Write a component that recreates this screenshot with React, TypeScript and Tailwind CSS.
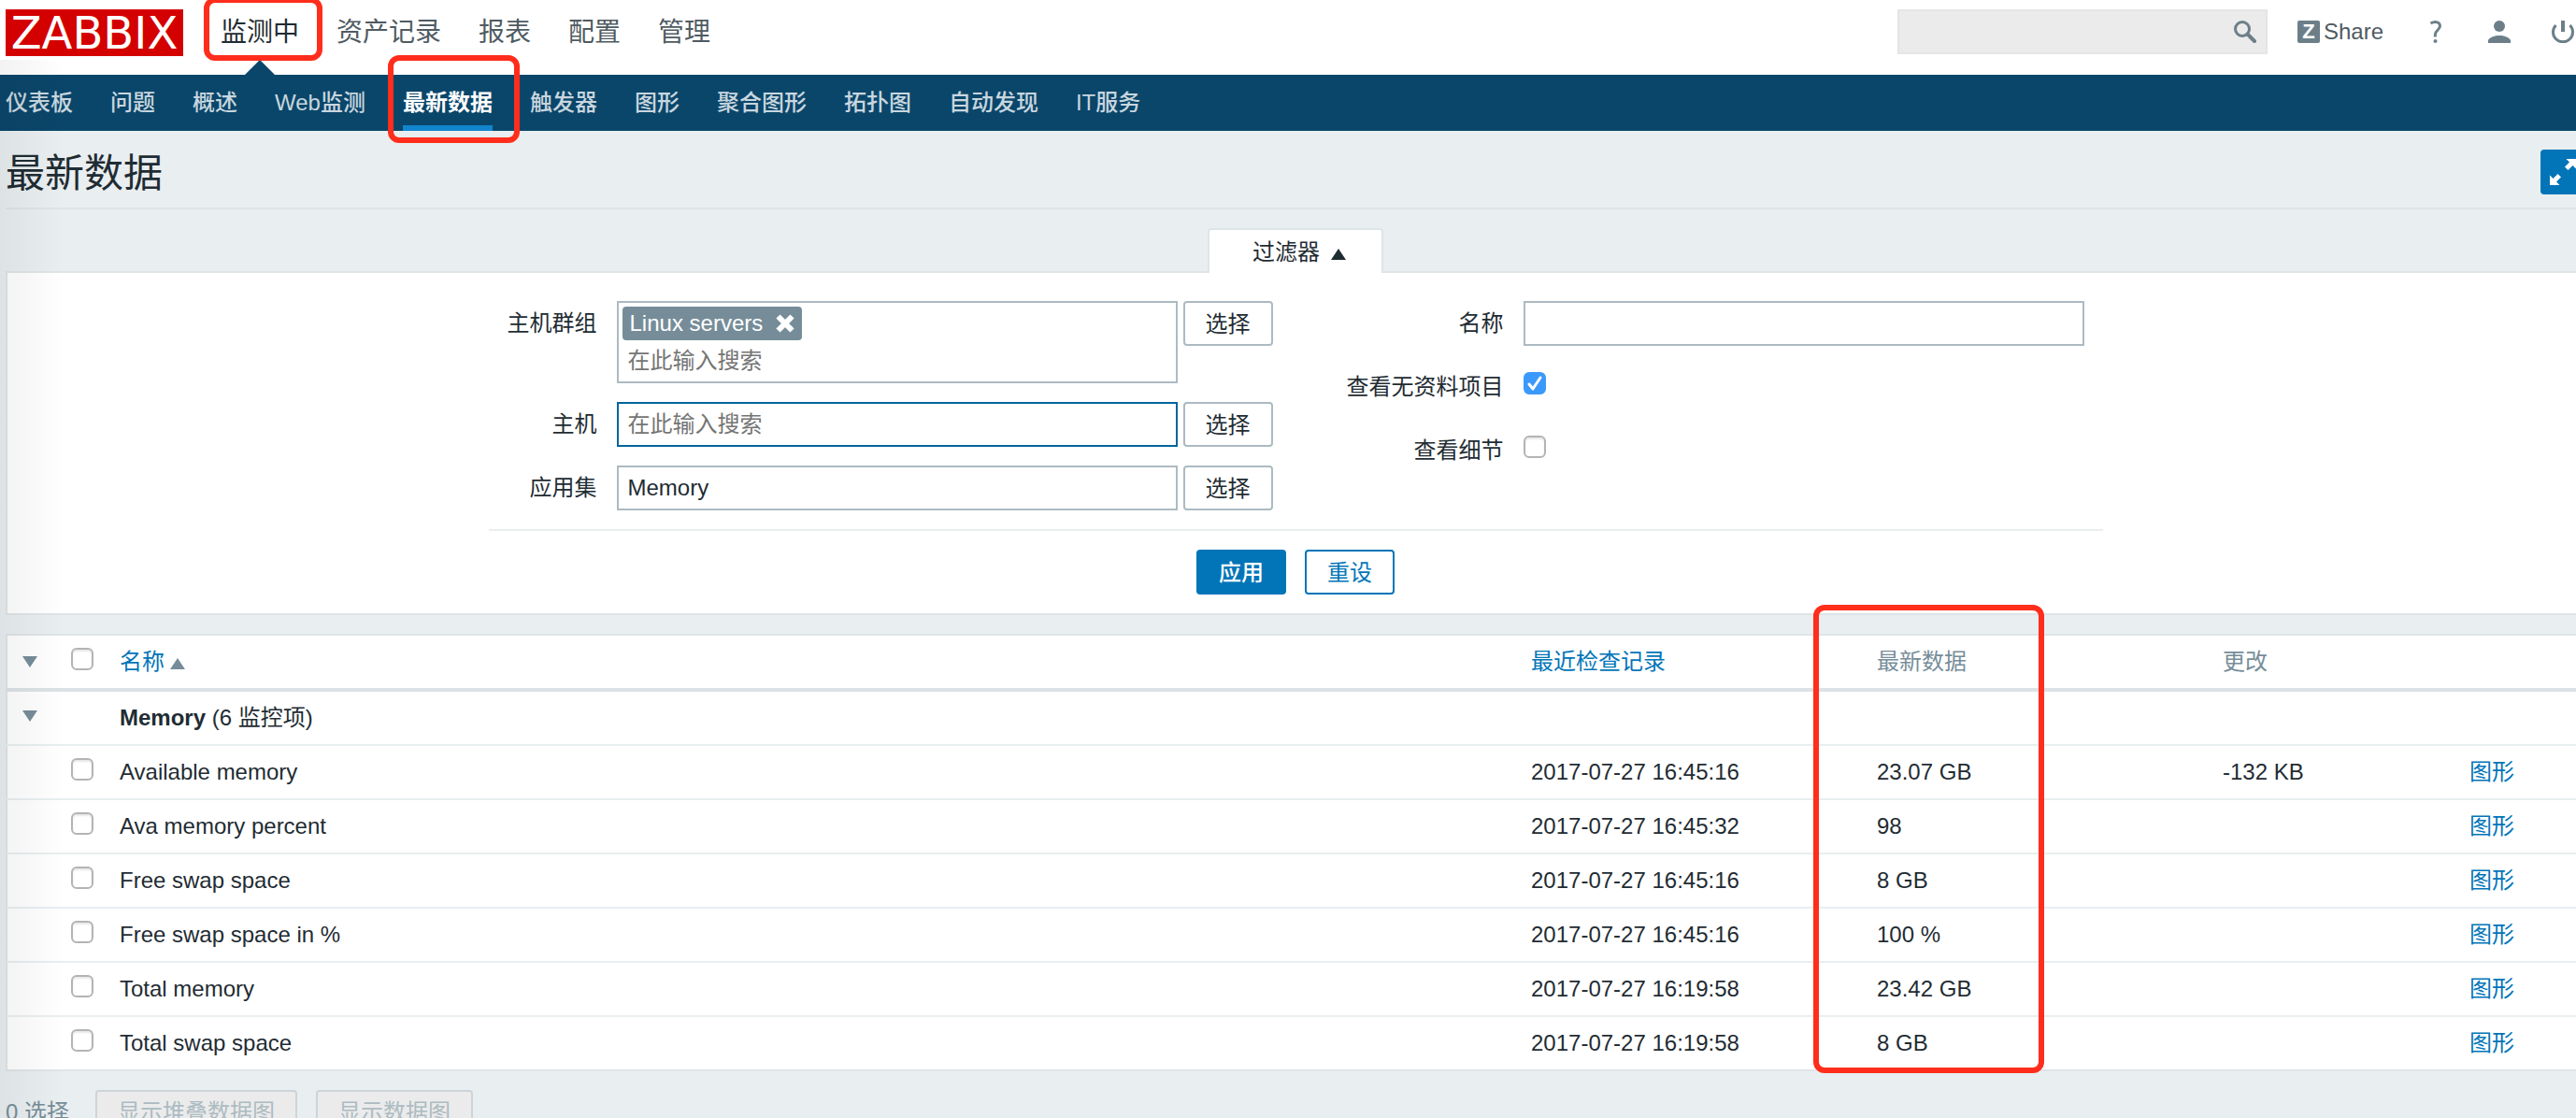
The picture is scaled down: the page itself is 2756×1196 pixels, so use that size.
import React, { useState } from 'react';

interface Item {
  name: string;
  lastCheck: string;
  lastValue: string;
  change?: string;
}

const mainMenu = ['监测中', '资产记录', '报表', '配置', '管理'];

const subMenu = [
  '仪表板', '问题', '概述', 'Web监测', '最新数据', '触发器',
  '图形', '聚合图形', '拓扑图', '自动发现', 'IT服务',
];

const items: Item[] = [
  { name: 'Available memory', lastCheck: '2017-07-27 16:45:16', lastValue: '23.07 GB', change: '-132 KB' },
  { name: 'Ava memory percent', lastCheck: '2017-07-27 16:45:32', lastValue: '98' },
  { name: 'Free swap space', lastCheck: '2017-07-27 16:45:16', lastValue: '8 GB' },
  { name: 'Free swap space in %', lastCheck: '2017-07-27 16:45:16', lastValue: '100 %' },
  { name: 'Total memory', lastCheck: '2017-07-27 16:19:58', lastValue: '23.42 GB' },
  { name: 'Total swap space', lastCheck: '2017-07-27 16:19:58', lastValue: '8 GB' },
];

const Triangle: React.FC<{ up?: boolean; className?: string }> = ({ up, className }) => (
  <svg viewBox="0 0 16 12" className={`w-4 h-3 ${className ?? ''}`} fill="currentColor" aria-hidden="true">
    <path d={up ? 'M8 0L16 12H0z' : 'M0 0H16L8 12z'} />
  </svg>
);

// 红色标注框
const Mark: React.FC<{ className: string }> = ({ className }) => (
  <span className={`absolute border-6 border-[#ff2d1c] rounded-xl pointer-events-none z-10 ${className}`} />
);

interface CheckboxProps {
  id?: string;
  label?: string;
  defaultChecked?: boolean;
}

const Checkbox: React.FC<CheckboxProps> = ({ id, label, defaultChecked }) => (
  <span className="relative block w-6 h-6">
    <input
      id={id}
      type="checkbox"
      aria-label={label}
      defaultChecked={defaultChecked}
      className="peer block appearance-none w-6 h-6 rounded-md border-2 border-[#b4b4b4] bg-white shadow-[inset_0_2px_2px_#e8e8e8] checked:bg-[#3b99fc] checked:border-[#3b99fc] checked:shadow-none"
    />
    <svg viewBox="0 0 24 24" className="absolute inset-0 hidden peer-checked:block pointer-events-none" fill="none" stroke="#fff" strokeWidth="3" strokeLinecap="round" strokeLinejoin="round">
      <path d="M6 13l4 5 8-12" />
    </svg>
  </span>
);

const SelectButton: React.FC = () => (
  <button type="button" className="block w-24 h-12 pt-0.5 border-2 border-[#acbbc2] rounded bg-white leading-[42px]">
    选择
  </button>
);

const Header: React.FC = () => (
  <header className="flex items-start justify-between h-20 bg-white">
    <div className="flex items-start pt-2.5 pl-1.5">
      <a href="#" className="flex items-center justify-center w-[190px] h-[50px] bg-[#d40000] text-white text-[48px] leading-[50px] font-['DejaVu_Sans',sans-serif]">
        ZABBIX
      </a>
      <nav className="flex gap-10 ml-10 text-[28px] leading-[50px] text-[#4f5b62]">
        {mainMenu.map((label, i) => (
          <div key={label} className="relative">
            <a href="#" className={i === 0 ? 'text-[#1f2c33]' : ''}>{label}</a>
            {i === 0 && (
              <>
                <Mark className="-left-[18px] -right-[25px] -top-[13px] h-[68px]" />
                <svg viewBox="0 0 32 16" className="absolute left-[26px] top-[54px] w-8 h-4" fill="#0a466a">
                  <path d="M16 0L32 16H0z" />
                </svg>
              </>
            )}
          </div>
        ))}
      </nav>
    </div>
    <div className="flex items-center h-12 mt-2.5 text-[#6c7f89]">
      <form className="relative w-[396px] mr-8">
        <input type="text" aria-label="搜索" className="block w-full h-12 px-3 pr-12 bg-[#ebebeb] border-2 border-[#e5e5e5]" />
        <button type="button" aria-label="搜索" className="absolute right-3 top-3">
          <svg viewBox="0 0 24 24" className="w-6 h-6" fill="none" stroke="currentColor" strokeWidth="3">
            <circle cx="9" cy="9" r="7.5" />
            <path d="M14.5 14.5L22 22" strokeWidth="4" strokeLinecap="round" />
          </svg>
        </button>
      </form>
      <a href="#" className="flex items-center gap-1 mr-[50px] text-[#4f5b62]">
        <span className="flex items-center justify-center w-6 h-6 rounded-xs bg-[#6c7f89] text-white text-[22px] leading-6 font-bold">Z</span>
        Share
      </a>
      <a href="#" aria-label="帮助" className="mr-[50px]">
        <svg viewBox="0 0 12 24" className="w-3 h-6" fill="none" stroke="currentColor" strokeWidth="3">
          <path d="M0.500 3C2.500 1.800 4 1.500 5.500 1.500c3 0 5 1.700 5 4.300 0 4.200-5.200 4.700-5.200 9.200v2.500" />
          <circle cx="5.500" cy="22" r="2" fill="currentColor" stroke="none" />
        </svg>
      </a>
      <a href="#" aria-label="用户" className="mr-11">
        <svg viewBox="0 0 24 24" className="w-6 h-6" fill="currentColor">
          <circle cx="12" cy="6" r="6" />
          <path d="M0 24v-3c2-3.500 7-5 12-5s10 1.500 12 5v3z" />
        </svg>
      </a>
      <a href="#" aria-label="退出" className="mr-0.5">
        <svg viewBox="0 0 24 24" className="w-6 h-6" fill="none" stroke="currentColor" strokeWidth="3">
          <path d="M4.500 5a10.500 10.500 0 1 0 15 0" />
          <path d="M12 0v12" strokeWidth="4" />
        </svg>
      </a>
    </div>
  </header>
);

const SubNav: React.FC = () => (
  <nav className="flex gap-10 h-[60px] pl-1.5 bg-[#0a466a] text-[#c8d6df] font-medium leading-[60px]">
    {subMenu.map((label) => {
      const active = label === '最新数据';
      return (
        <div key={label} className="relative">
          <a href="#" className={active ? 'block h-[60px] border-b-6 border-[#1285cd] text-white font-bold' : 'block'}>
            {label}
          </a>
          {active && <Mark className="-left-4 -right-[29px] -top-[21px] h-[94px]" />}
        </div>
      );
    })}
  </nav>
);

const Filter: React.FC = () => {
  const [groups, setGroups] = useState<string[]>(['Linux servers']);
  const inputClass = 'block w-full h-12 px-2.5 bg-white border-2 placeholder:text-[#757575] outline-none';

  return (
    <section className="pt-5">
      <div className="flex justify-center">
        <button type="button" className="relative flex items-center gap-3 h-12 -mb-0.5 pt-0.5 pr-[38px] pl-[46px] bg-white border-2 border-b-0 border-[#dfe4e7] rounded-t">
          过滤器
          <Triangle up className="mt-1" />
        </button>
      </div>
      <form className="pt-[30px] pb-5 bg-white border-2 border-[#dfe4e7]">
        <div className="w-fit mx-auto">
          <div className="flex gap-20 px-5 pb-5 border-b-2 border-[#e9eef0]">
            <div className="grid grid-cols-[96px_600px_96px] gap-y-5 leading-[48px]">
              <label htmlFor="groups" className="text-right">主机群组</label>
              <div className="h-[88px] ml-[21px] -mr-[21px] p-1 border-2 border-[#acbbc2]">
                {groups.map((group) => (
                  <span key={group} className="flex items-center justify-between w-48 h-9 px-2 rounded bg-[#768d99] text-white">
                    {group}
                    <button type="button" aria-label="移除" onClick={() => setGroups([])}>
                      <svg viewBox="0 0 20 20" className="w-5 h-5" stroke="currentColor" strokeWidth="6">
                        <path d="M2.500 2.500l15 15M17.500 2.500l-15 15" />
                      </svg>
                    </button>
                  </span>
                ))}
                <input id="groups" type="text" placeholder="在此输入搜索" className="block w-full h-11 px-1.5 placeholder:text-[#757575] outline-none" />
              </div>
              <div className="ml-[27px]"><SelectButton /></div>

              <label htmlFor="hosts" className="text-right">主机</label>
              <div className="ml-[21px] -mr-[21px]">
                <input id="hosts" type="text" placeholder="在此输入搜索" className={`${inputClass} border-[#00659c]`} />
              </div>
              <div className="ml-[27px]"><SelectButton /></div>

              <label htmlFor="application" className="text-right">应用集</label>
              <div className="ml-[21px] -mr-[21px]">
                <input id="application" type="text" defaultValue="Memory" className={`${inputClass} border-[#acbbc2]`} />
              </div>
              <div className="ml-[27px]"><SelectButton /></div>
            </div>
            <div className="grid grid-cols-[168px_600px] content-start gap-x-[21px] gap-y-5 ml-[26px] leading-[48px]">
              <label htmlFor="name" className="text-right">名称</label>
              <input id="name" type="text" className={`${inputClass} border-[#acbbc2]`} />
              <label htmlFor="no-data" className="h-12 text-right">查看无资料项目</label>
              <div className="pt-2"><Checkbox id="no-data" defaultChecked /></div>
              <label htmlFor="details" className="h-12 text-right">查看细节</label>
              <div className="pt-2"><Checkbox id="details" /></div>
            </div>
          </div>
          <div className="flex justify-center gap-5 pt-5">
            <button type="submit" className="w-24 h-12 pt-0.5 rounded bg-[#0275b8] text-white font-medium">应用</button>
            <button type="reset" className="w-24 h-12 pt-0.5 rounded border-2 border-[#0275b8] bg-white text-[#0275b8]">重设</button>
          </div>
        </div>
      </form>
    </section>
  );
};

const DataTable: React.FC = () => (
  <table className="w-full mt-5 table-fixed border-collapse bg-white border-2 border-[#dfe4e7] text-left">
    <colgroup>
      <col className="w-[59px]" />
      <col className="w-[52px]" />
      <col />
      <col className="w-[370px]" />
      <col className="w-[370px]" />
      <col className="w-[264px]" />
      <col className="w-[133px]" />
    </colgroup>
    <thead>
      <tr className="h-[59px] border-b-4 border-[#dce2e5] text-[#768d99]">
        <th className="pl-4">
          <button type="button" aria-label="展开全部" className="block"><Triangle /></button>
        </th>
        <th className="px-2.5 pb-1.5"><Checkbox label="全选" /></th>
        <th className="px-2.5 font-normal">
          <a href="#" className="inline-flex items-center gap-1.5 text-[#0275b8]">
            名称
            <Triangle up className="mt-1 text-[#768d99]" />
          </a>
        </th>
        <th className="px-2.5 font-normal"><a href="#" className="text-[#0275b8]">最近检查记录</a></th>
        <th className="relative px-2.5 font-normal">
          最新数据
          <Mark className="-left-[58px] -top-[33px] w-[247px] h-[501px]" />
        </th>
        <th className="px-2.5 font-normal">更改</th>
        <th />
      </tr>
    </thead>
    <tbody>
      <tr className="h-[59px] border-b-2 border-[#e9eef0]">
        <td className="pl-4 pb-1 text-[#768d99]">
          <button type="button" aria-label="收起" className="block"><Triangle /></button>
        </td>
        <td />
        <td className="px-2.5" colSpan={5}><b>Memory</b> (6 监控项)</td>
      </tr>
      {items.map((item) => (
        <tr key={item.name} className="h-[58px] border-b-2 border-[#e9eef0] last:border-[#dfe4e7]">
          <td />
          <td className="px-2.5 pb-1.5"><Checkbox label={item.name} /></td>
          <td className="px-2.5">{item.name}</td>
          <td className="px-2.5">{item.lastCheck}</td>
          <td className="px-2.5">{item.lastValue}</td>
          <td className="px-2.5">{item.change}</td>
          <td className="px-2.5"><a href="#" className="text-[#0275b8]">图形</a></td>
        </tr>
      ))}
    </tbody>
  </table>
);

export default function App() {
  return (
    <div
      lang="zh-CN"
      className="relative h-screen overflow-hidden bg-[#e9eef0] text-2xl leading-8 text-[#1f2c33] font-['Liberation_Sans','Noto_Sans_CJK_SC',sans-serif]"
    >
      <Header />
      <SubNav />
      <main className="ml-1.5 -mr-2.5">
        <div className="flex items-start justify-between h-[84px] pt-5 border-b-2 border-[#dfe4e7]">
          <h1 className="text-[42px] leading-[52px]">最新数据</h1>
          <button type="button" aria-label="全屏" className="flex items-center justify-center w-12 h-12 rounded bg-[#0275b8] text-white">
            <svg viewBox="0 0 28 28" className="w-7 h-7" fill="currentColor">
              <path d="M17.500 0H28v10.500l-3.500-3.500-5 5-3.500-3.500 5-5z" />
              <path d="M10.500 28H0V17.500l3.500 3.500 5-5 3.500 3.500-5 5z" />
            </svg>
          </button>
        </div>
        <Filter />
        <DataTable />
        <div className="flex items-center gap-5 mt-5">
          <span className="w-[76px] whitespace-nowrap text-[#768d99]">0 选择</span>
          <button type="button" disabled className="h-12 px-[22px] border-2 border-[#ccd5da] rounded bg-[#ebebeb] text-[#acbbc2]">显示堆叠数据图</button>
          <button type="button" disabled className="h-12 px-[22px] border-2 border-[#ccd5da] rounded bg-[#ebebeb] text-[#acbbc2]">显示数据图</button>
        </div>
      </main>
      <div className="absolute left-0 top-16 bottom-0 w-[70px] bg-linear-to-r from-black/5 to-transparent pointer-events-none" />
    </div>
  );
}
